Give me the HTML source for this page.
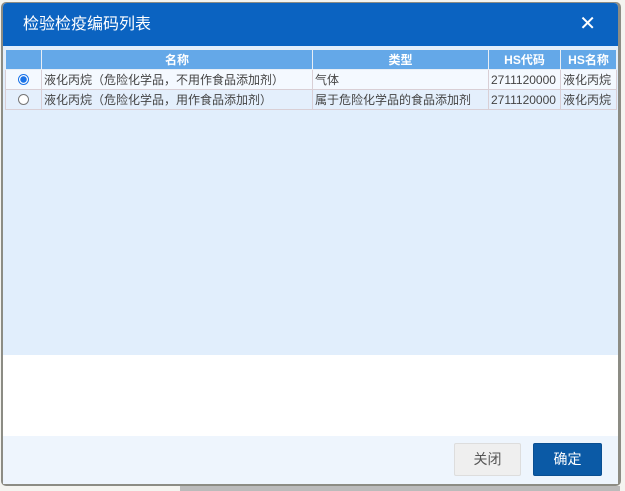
<!DOCTYPE html>
<html><head><meta charset="utf-8"><style>
*{margin:0;padding:0;box-sizing:border-box}
body{width:625px;height:491px;background:#f4f4f0;position:relative;overflow:hidden;font-family:"Liberation Sans","Noto Sans CJK SC",sans-serif}
.sh{position:absolute;left:1px;top:2px;width:620px;height:484px;background:#8c8c84;border-radius:5px}
.bt{position:absolute;left:180px;top:486px;width:440px;height:5px;background:#bbb}
.dlg{position:absolute;left:3px;top:3px;width:615px;height:481px;background:#fff;border-radius:4px 4px 0 0;overflow:hidden}
.hd{height:43px;background:#0b63c1;color:#fff;font-size:16px;line-height:43px;padding-left:20px}
.x{position:absolute;right:22px;top:11px;color:#fff;font-size:20px;line-height:20px}
.body{position:absolute;left:0;top:43px;width:615px;height:309px;background:#e1eefc}
table{position:absolute;left:2px;top:3px;border-collapse:collapse;font-size:12px;color:#444}
td,th{border:1px solid #d9cfd5;height:20px;padding:0 2px;white-space:nowrap;overflow:hidden}
th{background:#64a8e8;color:#fff;font-weight:bold;text-align:center;border-color:#e8eef5}
tr.r1 td{background:#f4f9ff}
tr.r2 td{background:#e4effc}
.rad{width:11px;height:11px;border-radius:50%;border:1px solid #777;background:#fff;margin:0 auto}
.rad.on{border-color:#1a73e8;background:radial-gradient(circle,#1a73e8 0 3px,#fff 3.5px)}
.ft{position:absolute;left:0;top:433px;width:615px;height:48px;background:#eef5fd}
.b{position:absolute;top:7px;height:33px;font-size:14px;line-height:31px;text-align:center;border-radius:2px}
.b1{left:451px;width:67px;background:#efefef;border:1px solid #ddd;color:#555}
.b2{left:530px;width:69px;background:#0b5aa6;color:#fff;border:1px solid #0a4f92}
</style></head><body>
<div class="sh"></div><div class="bt"></div>
<div class="dlg">
<div class="hd">检验检疫编码列表</div><div class="x">✕</div>
<div class="body">
<table>
<tr><th style="width:36px"></th><th style="width:271px">名称</th><th style="width:176px">类型</th><th style="width:72px">HS代码</th><th style="width:56px">HS名称</th></tr>
<tr class="r1"><td><div class="rad on"></div></td><td>液化丙烷（危险化学品，不用作食品添加剂）</td><td>气体</td><td>2711120000</td><td>液化丙烷</td></tr>
<tr class="r2"><td><div class="rad"></div></td><td>液化丙烷（危险化学品，用作食品添加剂）</td><td>属于危险化学品的食品添加剂</td><td>2711120000</td><td>液化丙烷</td></tr>
</table>
</div>
<div class="ft"><div class="b b1">关闭</div><div class="b b2">确定</div></div>
</div>
</body></html>
